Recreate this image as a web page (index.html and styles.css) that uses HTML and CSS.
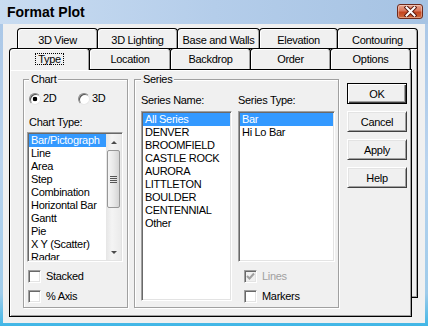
FILE: index.html
```html
<!DOCTYPE html>
<html>
<head>
<meta charset="utf-8">
<title>Format Plot</title>
<link rel="stylesheet" href="styles.css">
</head>
<body>
<div class="window">
  <div class="titlebar">
    <span class="title">Format Plot</span>
    <span class="close">
      <svg width="13" height="11" viewBox="0 0 13 11">
        <path d="M2.5 1.5 L10.5 9.5 M10.5 1.5 L2.5 9.5" stroke="#5a1a10" stroke-width="4" stroke-linecap="square"/>
        <path d="M2.5 1.5 L10.5 9.5 M10.5 1.5 L2.5 9.5" stroke="#fff" stroke-width="2" stroke-linecap="square"/>
      </svg>
    </span>
  </div>
  <div class="client">
    <div class="tabrow back">
      <div class="tab w81">3D View</div>
      <div class="tab w81">3D Lighting</div>
      <div class="tab w83">Base and Walls</div>
      <div class="tab w79">Elevation</div>
      <div class="tab w81">Contouring</div>
    </div>
    <div class="stack">
      <div class="backpage"></div>
      <div class="tabrow front">
        <div class="tab sel w81"><span class="focus">Type</span></div>
        <div class="tab w82">Location</div>
        <div class="tab w81">Backdrop</div>
        <div class="tab w81">Order</div>
        <div class="tab w81">Options</div>
      </div>
      <div class="page">
        <div class="group chart">
          <div class="legend">Chart</div>
          <div class="radios">
            <div class="radio"><span class="rb on"></span>2D</div>
            <div class="radio"><span class="rb"></span>3D</div>
          </div>
          <div class="lbl ctype">Chart Type:</div>
          <div class="list charttype">
            <div class="items">
              <div class="item sel">Bar/Pictograph</div>
              <div class="item">Line</div>
              <div class="item">Area</div>
              <div class="item">Step</div>
              <div class="item">Combination</div>
              <div class="item">Horizontal Bar</div>
              <div class="item">Gantt</div>
              <div class="item">Pie</div>
              <div class="item">X Y (Scatter)</div>
              <div class="item">Radar</div>
            </div>
            <div class="vscroll">
              <div class="arrow"><span class="tri up"></span></div>
              <div class="track"><div class="thumb"><span class="grip"></span></div></div>
              <div class="arrow"><span class="tri down"></span></div>
            </div>
          </div>
          <div class="check first"><span class="cb"></span>Stacked</div>
          <div class="check"><span class="cb"></span>% Axis</div>
        </div>
        <div class="group series">
          <div class="legend">Series</div>
          <div class="col name">
            <div class="lbl">Series Name:</div>
            <div class="list names">
              <div class="items">
                <div class="item sel">All Series</div>
                <div class="item">DENVER</div>
                <div class="item">BROOMFIELD</div>
                <div class="item">CASTLE ROCK</div>
                <div class="item">AURORA</div>
                <div class="item">LITTLETON</div>
                <div class="item">BOULDER</div>
                <div class="item">CENTENNIAL</div>
                <div class="item">Other</div>
              </div>
            </div>
          </div>
          <div class="col type">
            <div class="lbl">Series Type:</div>
            <div class="list types">
              <div class="items">
                <div class="item sel">Bar</div>
                <div class="item">Hi Lo Bar</div>
              </div>
            </div>
            <div class="check first disabled"><span class="cb off">
              <svg width="9" height="9" viewBox="0 0 9 9"><path d="M1 4 L3.5 6.5 L8 1.5" fill="none" stroke="#a0a0a0" stroke-width="2"/></svg>
            </span>Lines</div>
            <div class="check"><span class="cb"></span>Markers</div>
          </div>
        </div>
        <div class="buttons">
          <div class="btn default">OK</div>
          <div class="btn">Cancel</div>
          <div class="btn">Apply</div>
          <div class="btn">Help</div>
        </div>
      </div>
    </div>
  </div>
</div>
</body>
</html>
```

FILE: styles.css
```css
html, body {
  margin: 0;
  padding: 0;
  background: #f0f0f0;
}
body {
  font-family: "Liberation Sans", Arial, sans-serif;
  font-size: 11px;
  letter-spacing: -0.3px;
  color: #000;
}
.window {
  width: 428px;
  height: 326px;
  box-sizing: border-box;
  display: flex;
  flex-direction: column;
  background: linear-gradient(to bottom, #a9c6e6 0%, #b9d3ee 50%, #9fcbea 90%, #3fb6e6 100%);
}
.titlebar {
  height: 24px;
  flex: none;
  display: flex;
  align-items: flex-start;
  justify-content: space-between;
  padding: 0 5px 0 7px;
  background: linear-gradient(to right, #c9dcf1, #b4cdea 50%, #a6c3e3);
}
.title {
  font-size: 14px;
  font-weight: bold;
  letter-spacing: 0;
  line-height: 16px;
  margin-top: 4px;
}
.close {
  margin-top: 4px;
  width: 26px;
  height: 15px;
  box-sizing: border-box;
  border: 1px solid #6e2a1c;
  border-radius: 3px;
  background: linear-gradient(to bottom, #e8a58e 0%, #d9765a 45%, #c4441f 55%, #cf6a3c 100%);
  box-shadow: inset 0 0 0 1px rgba(255,255,255,0.35);
  display: flex;
  align-items: center;
  justify-content: center;
}
.client {
  flex: 1;
  margin: 0 3px 3px;
  background: #f0f0f0;
}
.tabrow {
  display: flex;
  align-items: flex-end;
}
.tabrow.back {
  height: 20px;
  margin: 4px 0 0 14px;
}
.tabrow.front {
  height: 21px;
  margin-left: 6px;
  position: relative;
  z-index: 2;
}
.tab {
  box-sizing: border-box;
  height: 20px;
  border: 1px solid #000;
  border-bottom: none;
  border-radius: 4px 4px 0 0;
  background: #f0f0f0;
  box-shadow: inset 1px 1px 0 #fff, inset -1px 0 0 #a0a0a0;
  display: flex;
  align-items: center;
  justify-content: center;
  margin-left: -1px;
  padding-top: 3px;
  white-space: nowrap;
}
.tab:first-child { margin-left: 0; }
.tabrow.front .tab {
  height: 21px;
  padding-top: 0;
}
.tabrow.front .tab.sel {
  height: 22px;
  margin-bottom: -1px;
  position: relative;
  z-index: 3;
}
.w79 { width: 79px; }
.w81 { width: 81px; }
.w82 { width: 82px; }
.w83 { width: 83px; }
.focus {
  border: 1px dotted #000;
  padding: 0 2px;
  line-height: 10px;
  margin-top: -1px;
}
.stack {
  position: relative;
}
.backpage {
  position: absolute;
  left: 14px;
  top: 0;
  width: 401px;
  height: 250px;
  box-sizing: border-box;
  border: 1px solid #000;
  background: #f0f0f0;
  box-shadow: inset 1px 1px 0 #fff, inset -1px -1px 0 #a0a0a0;
}
.page {
  position: relative;
  z-index: 1;
  margin-left: 6px;
  width: 403px;
  height: 248px;
  box-sizing: border-box;
  border: 1px solid #000;
  background: #f0f0f0;
  box-shadow: inset 1px 1px 0 #fff, inset -1px -1px 0 #a0a0a0;
  display: flex;
  align-items: flex-start;
  padding: 9px 0 0 13px;
}
.group {
  position: relative;
  box-sizing: border-box;
  height: 229px;
  border: 1px solid #a0a0a0;
  box-shadow: inset 1px 1px 0 #fff, 1px 1px 0 #fff;
}
.legend {
  position: absolute;
  top: -7px;
  left: 6px;
  padding: 0 2px;
  line-height: 13px;
  background: #f0f0f0;
}
.chart .legend { left: 5px; }
.chart {
  width: 105px;
  padding: 12px 0 0 4px;
}
.radios {
  display: flex;
  height: 13px;
  padding-left: 1px;
}
.radio {
  width: 52px;
  display: flex;
  align-items: center;
  gap: 2px;
  line-height: 13px;
}
.rb {
  width: 12px;
  height: 12px;
  box-sizing: border-box;
  border-radius: 50%;
  border: 1px solid;
  border-color: #8a8a8a #e8e8e8 #e8e8e8 #8a8a8a;
  box-shadow: inset 1px 1px 0 #555;
  background: #fff;
}
.rb.on {
  background: radial-gradient(circle at 50% 50%, #000 0, #000 2px, #fff 2.6px);
}
.lbl {
  line-height: 13px;
  white-space: nowrap;
}
.ctype {
  margin: 11px 0 0 1px;
}
.list {
  box-sizing: border-box;
  background: #fff;
  border: 1px solid;
  border-color: #a0a0a0 #fff #fff #a0a0a0;
  box-shadow: inset 1px 1px 0 #696969, inset -1px -1px 0 #e3e3e3;
  padding: 1px;
  display: flex;
  overflow: hidden;
}
.items {
  flex: 1;
  overflow: hidden;
  min-width: 0;
}
.item {
  height: 13px;
  line-height: 13px;
  padding-left: 2px;
  white-space: nowrap;
}
.item.sel {
  background: #3399ff;
  color: #fff;
}
.charttype {
  width: 96px;
  height: 130px;
  margin: 3px 0 0 -1px;
}
.vscroll {
  width: 15px;
  display: flex;
  flex-direction: column;
  background: linear-gradient(to right, #e6e6e6, #f4f4f4 40%, #eaeaea);
}
.arrow {
  height: 16px;
  flex: none;
  display: flex;
  align-items: center;
  justify-content: center;
}
.tri {
  width: 0;
  height: 0;
  border-left: 3px solid transparent;
  border-right: 3px solid transparent;
}
.tri.up { border-bottom: 3px solid #4a4a4a; }
.tri.down { border-top: 3px solid #4a4a4a; }
.track {
  flex: 1;
}
.thumb {
  height: 58px;
  margin: 0 1px;
  box-sizing: border-box;
  border: 1px solid #979797;
  border-radius: 2px;
  background: linear-gradient(to right, #f5f5f5, #e8e8e8 50%, #d4d4d4);
  display: flex;
  align-items: center;
  justify-content: center;
}
.grip {
  width: 7px;
  height: 7px;
  background: repeating-linear-gradient(to bottom, #555 0, #555 1px, transparent 1px, transparent 2px);
}
.check {
  display: flex;
  align-items: center;
  gap: 5px;
  height: 13px;
  line-height: 13px;
  margin-top: 7px;
}
.check.first { margin-top: 8px; }
.cb {
  width: 13px;
  height: 13px;
  box-sizing: border-box;
  background: #fff;
  border: 1px solid;
  border-color: #a0a0a0 #fff #fff #a0a0a0;
  box-shadow: inset 1px 1px 0 #696969, inset -1px -1px 0 #e3e3e3;
  display: flex;
  align-items: center;
  justify-content: center;
}
.cb.off { background: #f0f0f0; }
.disabled { color: #a0a0a0; }
.series {
  width: 205px;
  margin-left: 6px;
  display: flex;
  gap: 6px;
  padding: 14px 0 0 6px;
}
.col {
  display: flex;
  flex-direction: column;
}
.col.name { width: 91px; }
.col.type { width: 97px; }
.col .lbl { margin-bottom: 4px; }
.names { height: 190px; }
.types { height: 151px; }
.col.type .check { margin-left: 6px; }
.buttons {
  width: 60px;
  margin: 4px 0 0 8px;
  display: flex;
  flex-direction: column;
  gap: 7px;
}
.btn {
  height: 21px;
  box-sizing: border-box;
  background: #f0f0f0;
  border: 1px solid;
  border-color: #fff #404040 #404040 #fff;
  box-shadow: inset 1px 1px 0 #e3e3e3, inset -1px -1px 0 #a0a0a0;
  display: flex;
  align-items: center;
  justify-content: center;
}
.btn.default {
  border: 1px solid #000;
  box-shadow: inset 1px 1px 0 #fff, inset -1px -1px 0 #404040, inset -2px -2px 0 #a0a0a0;
}
```
